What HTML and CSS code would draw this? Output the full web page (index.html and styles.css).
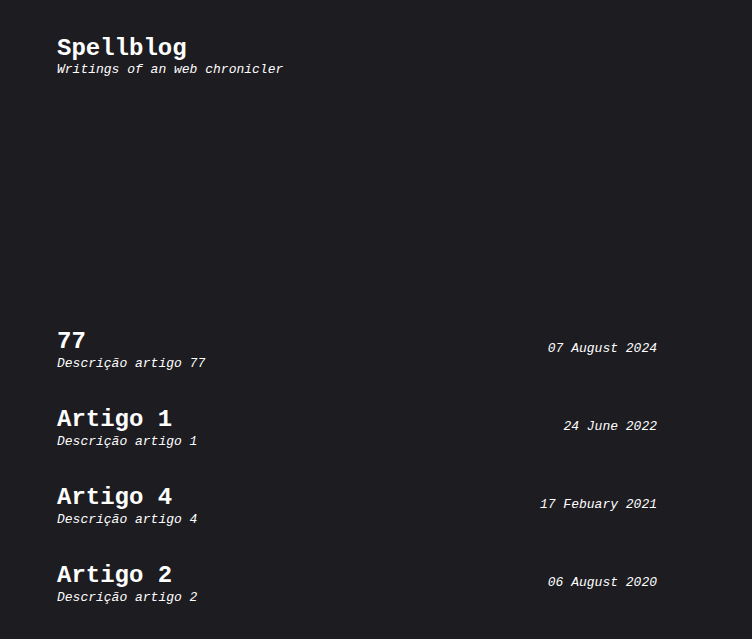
FILE: index.html
```html
<!DOCTYPE html>
<html lang="pt">
<head>
<meta charset="utf-8">
<title>Spellblog</title>
<link rel="stylesheet" href="styles.css">
</head>
<body>
<div class="page">
  <header class="header">
    <h1 class="site-title">Spellblog</h1>
    <p class="site-sub">Writings of an web chronicler</p>
  </header>
  <main class="posts">
    <a class="post" href="#">
      <div class="post-text">
        <h2 class="post-title">77</h2>
        <p class="post-desc">Descrição artigo 77</p>
      </div>
      <span class="post-date">07 August 2024</span>
    </a>
    <a class="post" href="#">
      <div class="post-text">
        <h2 class="post-title">Artigo 1</h2>
        <p class="post-desc">Descrição artigo 1</p>
      </div>
      <span class="post-date">24 June 2022</span>
    </a>
    <a class="post" href="#">
      <div class="post-text">
        <h2 class="post-title">Artigo 4</h2>
        <p class="post-desc">Descrição artigo 4</p>
      </div>
      <span class="post-date">17 Febuary 2021</span>
    </a>
    <a class="post" href="#">
      <div class="post-text">
        <h2 class="post-title">Artigo 2</h2>
        <p class="post-desc">Descrição artigo 2</p>
      </div>
      <span class="post-date">06 August 2020</span>
    </a>
  </main>
</div>
</body>
</html>
```
FILE: styles.css
```css
html, body {
  margin: 0;
  padding: 0;
  background: #1d1c21;
  color: #ffffff;
  font-family: "Liberation Mono", "DejaVu Sans Mono", monospace;
}
.page {
  width: 600px;
  padding: 35px 0 0 57px;
}
.header {
  display: flex;
  flex-direction: column;
}
.site-title {
  margin: 0;
  font-size: 24px;
  font-weight: 700;
  line-height: 27px;
}
.site-sub {
  margin: 0;
  font-size: 13px;
  font-style: italic;
  line-height: 16px;
}
.posts {
  margin-top: 250px;
  display: flex;
  flex-direction: column;
  gap: 34px;
}
.post {
  display: flex;
  justify-content: space-between;
  align-items: center;
  color: inherit;
  text-decoration: none;
}
.post-title {
  margin: 0;
  font-size: 24px;
  font-weight: 700;
  line-height: 28px;
}
.post-desc {
  margin: 0;
  font-size: 13px;
  font-style: italic;
  line-height: 16px;
}
.post-date {
  padding-bottom: 4px;
  font-size: 13px;
  font-style: italic;
}
```
